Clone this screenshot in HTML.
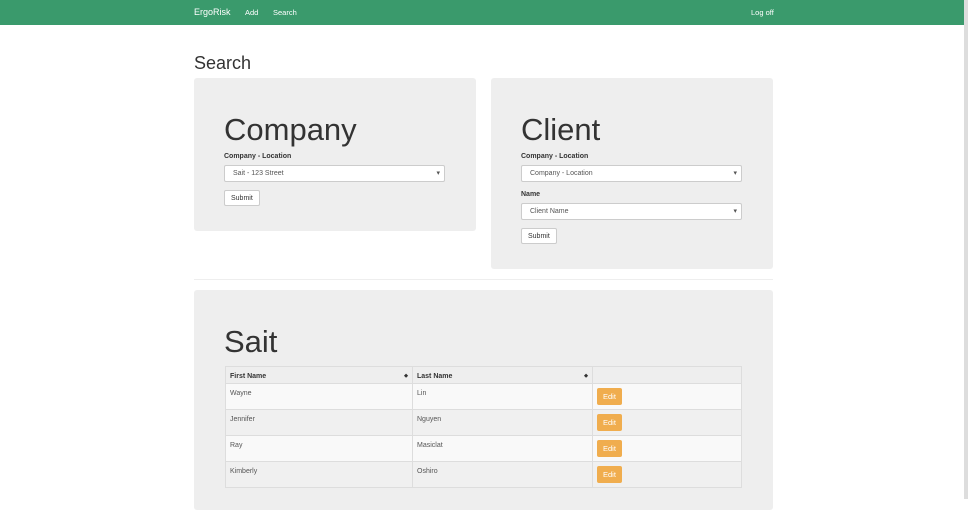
<!DOCTYPE html>
<html><head><style>
*{box-sizing:border-box;margin:0;padding:0}
body{width:968px;height:499px;overflow:hidden;font-family:"Liberation Sans",sans-serif;background:#fff;color:#333;position:relative}
.nav{position:absolute;left:0;top:0;width:964px;height:25px;background:#3a9a6c;color:#fff;font-size:7.5px}
.nav span{position:absolute;top:8px}
.sb{position:absolute;right:0;top:0;width:4px;height:499px;background:#ddd}
.box{position:absolute;background:#eee;border-radius:3px}
h1{position:absolute;font-weight:normal;color:#333;line-height:1}
.lbl{position:absolute;font-size:7px;font-weight:bold}
.sel{position:absolute;height:17px;background:#fff;border:1px solid #ccc;border-radius:2px;font-size:7px;color:#555;padding:4px 8px}
.sel:after{content:"▾";position:absolute;right:4px;top:3px;font-size:7px}
.btn{position:absolute;height:16px;background:#fff;border:1px solid #ccc;border-radius:2px;font-size:7px;padding:4px 6px;color:#333}
table{position:absolute;left:225px;top:366px;width:517px;border-collapse:collapse;font-size:7px;line-height:9px}
td,th{border:1px solid #ddd;text-align:left;vertical-align:top;padding:5px 4px 0}
th{height:17px;background:#eee;position:relative}
td{height:26px;color:#555}
tr.o td{background:#f9f9f9}
tr.e td{background:#f0f0f0}
.ed{display:inline-block;background:#f0ad4e;color:#fff;border-radius:2px;height:17px;line-height:17px;padding:0 6px;font-size:7.5px}
.s{position:absolute;right:4px;top:5px;font-size:5px}
</style></head><body>
<div class="nav"><span style="left:194px;font-size:9px;top:7px">ErgoRisk</span><span style="left:245px">Add</span><span style="left:273px">Search</span><span style="left:751px">Log off</span></div>
<div class="sb"></div>
<h1 style="left:194px;top:54px;font-size:18px">Search</h1>
<div class="box" style="left:194px;top:78px;width:282px;height:153px"></div>
<h1 style="left:224px;top:114px;font-size:31px">Company</h1>
<div class="lbl" style="left:224px;top:153px">Company - Location</div>
<div class="sel" style="left:224px;top:165px;width:221px">Sait - 123 Street</div>
<div class="btn" style="left:224px;top:190px">Submit</div>
<div class="box" style="left:491px;top:78px;width:282px;height:191px"></div>
<h1 style="left:521px;top:114px;font-size:31px">Client</h1>
<div class="lbl" style="left:521px;top:153px">Company - Location</div>
<div class="sel" style="left:521px;top:165px;width:221px">Company - Location</div>
<div class="lbl" style="left:521px;top:191px">Name</div>
<div class="sel" style="left:521px;top:203px;width:221px">Client Name</div>
<div class="btn" style="left:521px;top:228px">Submit</div>
<div style="position:absolute;left:194px;top:279px;width:579px;border-top:1px solid #eee"></div>
<div class="box" style="left:194px;top:290px;width:579px;height:220px"></div>
<h1 style="left:224px;top:326px;font-size:31px">Sait</h1>
<table>
<tr><th style="width:187px">First Name<span class="s">◆</span></th><th style="width:180px">Last Name<span class="s">◆</span></th><th></th></tr>
<tr class="o"><td>Wayne</td><td>Lin</td><td style="padding-top:4px"><span class="ed">Edit</span></td></tr>
<tr class="e"><td>Jennifer</td><td>Nguyen</td><td style="padding-top:4px"><span class="ed">Edit</span></td></tr>
<tr class="o"><td>Ray</td><td>Masiclat</td><td style="padding-top:4px"><span class="ed">Edit</span></td></tr>
<tr class="e"><td>Kimberly</td><td>Oshiro</td><td style="padding-top:4px"><span class="ed">Edit</span></td></tr>
</table>
</body></html>
